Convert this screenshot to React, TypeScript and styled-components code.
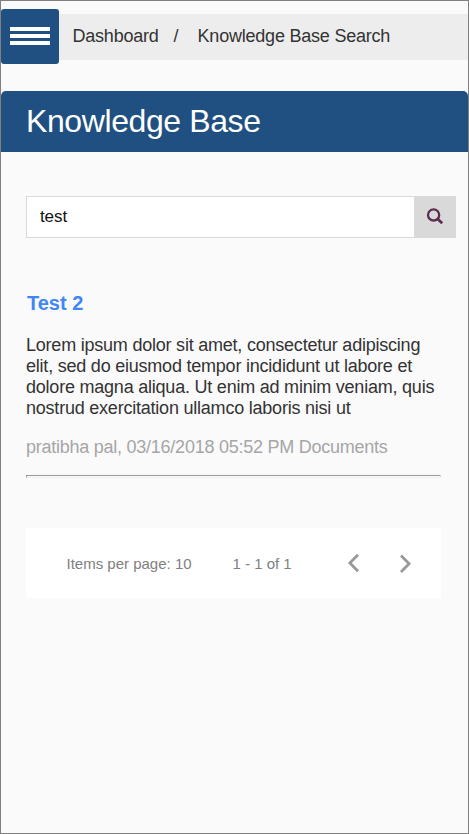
import React from "react";
import styled, { createGlobalStyle } from "styled-components";

const GlobalStyle = createGlobalStyle`
  * { box-sizing: border-box; }
  body { margin: 0; background: #fafafa; }
`;

const Screen = styled.div`
  height: 834px;
  border: 1px solid #808080;
  background: #fafafa;
  font-family: "Liberation Sans", Arial, sans-serif;
  font-size: 18px;
  line-height: 21px;
  letter-spacing: -0.22px;
  color: #333;
  overflow: hidden;
`;

const TopBar = styled.header`
  display: flex;
  align-items: center;
  margin-top: 8px;
  height: 55px;
`;

const MenuButton = styled.button`
  display: flex;
  flex-direction: column;
  align-items: center;
  gap: 3px;
  width: 58px;
  height: 55px;
  padding: 18px 0 0;
  margin: 0;
  border: 0;
  border-radius: 3px;
  background: #205081;
`;

const MenuBar = styled.span`
  width: 40px;
  height: 4px;
  background: #fff;
`;

const Breadcrumb = styled.nav`
  display: flex;
  flex: 1;
  align-items: center;
  height: 46px;
  margin-top: 1px;
  padding: 0 0 2px 13.5px;
  background: #ededed;
`;

const Separator = styled.span`
  width: 39px;
  padding-left: 15px;
`;

const Title = styled.h1`
  margin: 27px 0 0;
  height: 61px;
  padding-left: 25px;
  border-radius: 5px 5px 0 0;
  background: #205081;
  color: #fff;
  font-size: 32px;
  font-weight: 400;
  line-height: 61px;
  letter-spacing: -0.4px;
`;

const SearchForm = styled.form`
  display: flex;
  height: 42px;
  margin: 44px 12px 0 25px;
`;

const SearchInput = styled.input`
  flex: 1;
  min-width: 0;
  padding: 0 13px;
  border: 1px solid #d9d9d9;
  border-right: 0;
  border-radius: 0;
  outline: 0;
  background: #fff;
  color: #111;
  font: 17px "Liberation Sans", Arial, sans-serif;
  letter-spacing: -0.1px;
`;

const SearchButton = styled.button`
  display: flex;
  align-items: center;
  justify-content: center;
  width: 42px;
  padding: 0 0 2px;
  border: 0;
  background: #d9d9d9;
`;

const Result = styled.article`
  margin: 54px 27px 0 25px;
`;

const ResultTitle = styled.h2`
  margin: 0 0 0 1px;
  color: #4285f4;
  font-size: 20px;
  line-height: 22px;
  letter-spacing: 0;
`;

const Excerpt = styled.p`
  margin: 21px -5px 0 0;
`;

const Meta = styled.p`
  margin: 18px 0 0;
  color: #a6a6a6;
  letter-spacing: -0.25px;
  white-space: nowrap;
`;

const Divider = styled.hr`
  height: 3px;
  margin: 17px 0 0;
  border: 1px solid;
  border-color: #999 #eee #eee #999;
`;

const Paginator = styled.footer`
  display: flex;
  align-items: center;
  height: 70px;
  margin: 50px 27px 0 25px;
  padding: 0 24px 0 40.5px;
  background: #fff;
  color: #808080;
  font-size: 15px;
  letter-spacing: 0;
`;

const PageSize = styled.span`
  width: 166px;
`;

const Range = styled.span`
  width: 108.5px;
`;

const PageArrow = styled.button`
  display: flex;
  width: 24px;
  height: 24px;
  padding: 0;
  border: 0;
  background: none;

  & + & {
    margin-left: 28px;
  }
`;

export default function App() {
  return (
    <>
      <GlobalStyle />
      <Screen>
        <TopBar>
          <MenuButton aria-label="Open menu">
            <MenuBar />
            <MenuBar />
            <MenuBar />
          </MenuButton>
          <Breadcrumb>
            <span>Dashboard</span>
            <Separator>/</Separator>
            <span>Knowledge Base Search</span>
          </Breadcrumb>
        </TopBar>
        <Title>Knowledge Base</Title>
        <SearchForm onSubmit={(event) => event.preventDefault()}>
          <SearchInput aria-label="Search" defaultValue="test" />
          <SearchButton aria-label="Search">
            <svg width="18" height="18" viewBox="0 0 18 18" fill="none" stroke="#5c2d50">
              <circle cx="7.6" cy="7.9" r="5.6" strokeWidth="2.3" />
              <path d="M11.4 11.7L16.2 16.3" strokeWidth="2.7" />
            </svg>
          </SearchButton>
        </SearchForm>
        <Result>
          <ResultTitle>Test 2</ResultTitle>
          <Excerpt>
            Lorem ipsum dolor sit amet, consectetur adipiscing elit, sed do eiusmod tempor
            incididunt ut labore et dolore magna aliqua. Ut enim ad minim veniam, quis nostrud
            exercitation ullamco laboris nisi ut
          </Excerpt>
          <Meta>pratibha pal, 03/16/2018 05:52 PM Documents</Meta>
          <Divider />
        </Result>
        <Paginator>
          <PageSize>Items per page: 10</PageSize>
          <Range>1 - 1 of 1</Range>
          <PageArrow aria-label="Previous page">
            <svg width="24" height="24" viewBox="0 0 24 24" fill="none" stroke="#999" strokeWidth="2.8">
              <path d="M17 3.8L8.9 12L17 20.2" />
            </svg>
          </PageArrow>
          <PageArrow aria-label="Next page">
            <svg width="24" height="24" viewBox="0 0 24 24" fill="none" stroke="#999" strokeWidth="2.8">
              <path d="M8 4.6L16.1 12.8L8 21" />
            </svg>
          </PageArrow>
        </Paginator>
      </Screen>
    </>
  );
}
